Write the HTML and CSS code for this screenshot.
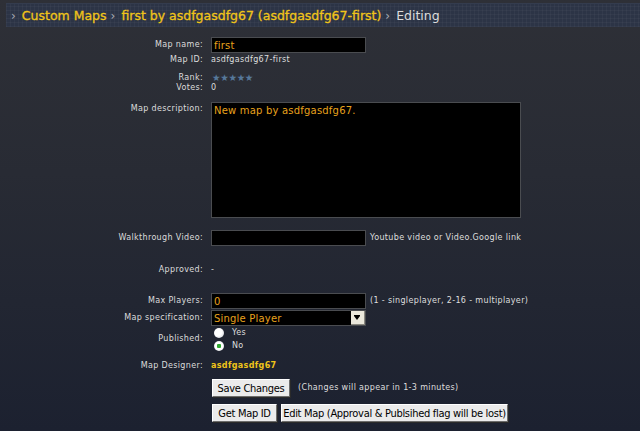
FILE: index.html
```html
<!DOCTYPE html>
<html lang="en">
<head>
    <meta charset="UTF-8" />
    <title>Editing - first by asdfgasdfg67</title>
    <link rel="stylesheet" href="styles.css">
</head>
<body>
    <div class="crumbs">
        <span class="sep">&rsaquo;</span>
        <a href="#">Custom Maps</a>
        <span class="sep">&rsaquo;</span>
        <a href="#">first by asdfgasdfg67 (asdfgasdfg67-first)</a>
        <span class="sep">&rsaquo;</span>
        <span class="current">Editing</span>
    </div>

    <form class="map-form">
        <div class="row">
            <label>Map name:</label>
            <div class="val"><input class="field" type="text" value="first"></div>
        </div>
        <div class="row gap-2">
            <label>Map ID:</label>
            <div class="val">asdfgasdfg67-first</div>
        </div>
        <div class="row gap-8">
            <label>Rank:</label>
            <div class="val stars">&#9733;&#9733;&#9733;&#9733;&#9733;</div>
        </div>
        <div class="row">
            <label>Votes:</label>
            <div class="val">0</div>
        </div>
        <div class="row gap-9 top">
            <label>Map description:</label>
            <div class="val"><textarea class="field area">New map by asdfgasdfg67.</textarea></div>
        </div>
        <div class="row gap-12">
            <label>Walkthrough Video:</label>
            <div class="val"><input class="field" type="text" value=""><span class="hint">Youtube video or Video.Google link</span></div>
        </div>
        <div class="row gap-19">
            <label>Approved:</label>
            <div class="val">-</div>
        </div>
        <div class="row gap-18">
            <label>Max Players:</label>
            <div class="val"><input class="field" type="text" value="0"><span class="hint">(1 - singleplayer, 2-16 - multiplayer)</span></div>
        </div>
        <div class="row gap-1">
            <label>Map specification:</label>
            <div class="val">
                <span class="select-wrap">
                    <select class="field">
                        <option>Single Player</option>
                        <option>Multiplayer</option>
                    </select>
                    <span class="arrow"></span>
                </span>
            </div>
        </div>
        <div class="row">
            <label>Published:</label>
            <div class="val radios">
                <label class="radio"><input type="radio" name="pub"> Yes</label>
                <label class="radio"><input type="radio" name="pub" checked> No</label>
            </div>
        </div>
        <div class="row gap-9">
            <label>Map Designer:</label>
            <div class="val designer">asdfgasdfg67</div>
        </div>
        <div class="row gap-8">
            <span></span>
            <div class="val"><button type="button" class="btn btn-save">Save Changes</button><span class="hint">(Changes will appear in 1-3 minutes)</span></div>
        </div>
        <div class="row gap-7">
            <span></span>
            <div class="val"><button type="button" class="btn btn-id">Get Map ID</button><button type="button" class="btn btn-edit">Edit Map (Approval &amp; Publsihed flag will be lost)</button></div>
        </div>
    </form>
</body>
</html>
```

FILE: styles.css
```css
body {
    margin: 0;
    min-height: 100vh;
    font-family: "DejaVu Sans", Verdana, sans-serif;
    font-size: 8px;
    letter-spacing: 0.35px;
    color: #dcdcdc;
    background: linear-gradient(#2e3037 0%, #282b34 40%, #1c2130 100%);
}

/* breadcrumb bar */
.crumbs {
    margin: 3px 0 0 6px;
    height: 23px;
    display: flex;
    align-items: center;
    padding-left: 5px;
    font-size: 12.5px;
    letter-spacing: 0;
    background-color: #2c3446;
    background-image:
        repeating-linear-gradient(90deg, rgba(255,255,255,0.03) 0 1px, transparent 1px 4px),
        repeating-linear-gradient(0deg, rgba(255,255,255,0.03) 0 1px, transparent 1px 4px);
    border-top: 1px solid #343c4e;
}

.crumbs a {
    color: #f0c419;
    text-decoration: none;
    -webkit-text-stroke: 0.3px #f0c419;
}

.crumbs .sep {
    color: #a8acb4;
    font-size: 12px;
    margin: 0 6px 0 0;
}

.crumbs a + .sep {
    margin-left: 4px;
}

.crumbs .current {
    color: #dcdcdc;
}

/* form */
.map-form {
    padding-top: 10px;
}

.row {
    display: grid;
    grid-template-columns: 203px auto;
    column-gap: 8px;
    align-items: center;
    line-height: 10px;
}

.row > label {
    text-align: right;
}

.row.top {
    align-items: start;
}

.row.top > label {
    padding-top: 2px;
}

.gap-1 { margin-top: 1px; }
.gap-2 { margin-top: 2px; }
.gap-7 { margin-top: 7px; }
.gap-8 { margin-top: 8px; }
.gap-9 { margin-top: 9px; }
.gap-12 { margin-top: 12px; }
.gap-18 { margin-top: 18px; }
.gap-19 { margin-top: 19px; }

.val {
    display: flex;
    align-items: center;
    color: #dedede;
}

.hint {
    margin-left: 4px;
}

.field {
    box-sizing: border-box;
    width: 155px;
    height: 16px;
    margin: 0;
    padding: 0 2px;
    background: #000;
    border: 1px solid #4a4c50;
    color: #e8a21c;
    font-family: "DejaVu Sans", Verdana, sans-serif;
    font-size: 10px;
    letter-spacing: 0.2px;
    outline: none;
}

.area {
    width: 310px;
    height: 116px;
    padding: 2px 2px;
    resize: none;
    line-height: 12px;
}

.stars {
    color: #56789a;
    font-size: 9.5px;
    letter-spacing: -0.3px;
    padding-left: 1px;
}

.select-wrap {
    position: relative;
    display: inline-block;
}

.select-wrap select {
    appearance: none;
    -webkit-appearance: none;
    display: block;
}

.select-wrap .arrow {
    position: absolute;
    top: 1px;
    right: 1px;
    width: 14px;
    height: 14px;
    background: #ebe8dc;
    border-right: 1px solid #8a8880;
    border-bottom: 1px solid #8a8880;
    box-sizing: border-box;
}

.select-wrap .arrow::after {
    content: "";
    position: absolute;
    left: 3px;
    top: 5px;
    border-left: 3px solid transparent;
    border-right: 3px solid transparent;
    border-top: 4px solid #000;
    box-shadow: 0 -1px 0 #000;
}

.radios {
    flex-direction: column;
    align-items: flex-start;
    padding-left: 3px;
}

.radio {
    display: flex;
    align-items: center;
    height: 13px;
    gap: 8px;
}

.radio input {
    appearance: none;
    -webkit-appearance: none;
    width: 10px;
    height: 10px;
    margin: 0;
    border-radius: 50%;
    background: radial-gradient(circle at 40% 40%, #ffffff 0 45%, #c0c4cc 100%);
}

.radio input:checked {
    background: radial-gradient(circle, #2fa82f 0 2px, #ffffff 2.5px 55%, #c0c4cc 100%);
}

.designer {
    color: #f0c419;
    font-weight: bold;
}

.btn {
    height: 18px;
    margin: 0 4px 0 1px;
    padding: 0;
    white-space: nowrap;
    font-family: "DejaVu Sans Condensed", "Liberation Sans", sans-serif;
    font-stretch: condensed;
    font-size: 11px;
    letter-spacing: -0.3px;
    color: #000;
    background: #ebebeb;
    border: 1px solid;
    border-color: #ffffff #6c6c6c #6c6c6c #ffffff;
    box-shadow: 1px 1px 0 #2a2a2a;
}

.btn-save { width: 78px; }
.btn-id { width: 65px; margin-right: 3px; }
.btn-edit { width: 227px; }
```
